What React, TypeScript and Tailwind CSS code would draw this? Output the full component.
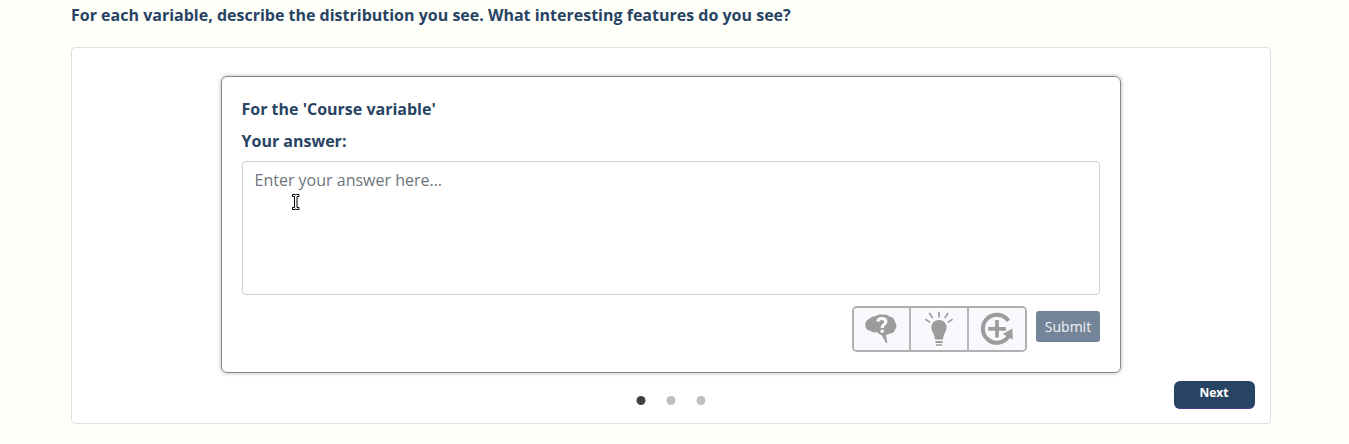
import React from 'react';

function BrainIcon() {
  return (
    <svg className="-ml-px" width="34" height="32" viewBox="0 0 34 32" aria-hidden="true">
      <path
        fill="#9c9c9c"
        d="M6 5.6C7.4 3.7 9.5 3 11.4 3.2 13.6 1.5 16.4 1 18.4 1.7 21.5 .9 24.6 1.9 26 3.8 29 4.2 30.8 6.4 30.8 8.8 32.9 10.7 33 14.2 31.2 16.2 30.6 19.2 28.2 20.8 25.5 20.6 24.6 21.6 23.2 22 21.8 21.9L23.4 29.7 22 30 17.6 21.9C15.5 21.6 13.8 20.6 13 19.1 10.5 20.1 7.4 19.5 6 17.6 3 17.2 1 14.8 1.4 12.4 1.2 9.2 3 6.4 6 5.6Z"
      />
      <path
        fill="none"
        stroke="#f8f9fc"
        strokeWidth="3.1"
        d="M13.8 8.6C13.9 6.5 15.5 5.5 17.8 5.5 20.3 5.5 21.9 6.6 21.9 8.7 21.9 11.5 18.2 11.4 18.2 15"
      />
      <circle cx="18.2" cy="18.2" r="1.8" fill="#f8f9fc" />
    </svg>
  );
}

function BulbIcon() {
  return (
    <svg width="32" height="38" viewBox="0 0 32 38" aria-hidden="true">
      <g stroke="#9c9c9c" strokeWidth="1.7">
        <path d="M2.4 9.2 7.2 12.4M6.2 3 9.7 8.1M16 1.8V7.5M25.1 3 21.8 8.1M29.6 9.3 24.8 12.4" />
      </g>
      <path
        fill="#9c9c9c"
        d="M16 10C11.6 10 8.4 13.2 8.4 17.2 8.4 21.9 11.6 22.9 12 29.5H20C20.4 22.9 23.6 21.9 23.6 17.2 23.6 13.2 20.4 10 16 10Z"
      />
      <path stroke="#9c9c9c" strokeWidth="2.2" d="M12.4 32H19.6" />
      <path stroke="#b3b3b3" strokeWidth="1.8" d="M13 35H19" />
    </svg>
  );
}

function AddCycleIcon() {
  return (
    <svg width="34" height="34" viewBox="0 0 34 34" aria-hidden="true">
      <g fill="none" stroke="#9c9c9c" strokeWidth="4.1">
        <path d="M28.4 8.8A14 14 0 1 0 28.6 24.4" />
        <path d="M17 8V25.6M8.2 16.8H25.8" strokeWidth="3.7" />
      </g>
      <path fill="#9c9c9c" d="M32.4 16.4 22.8 22 32.8 27.4Z" />
    </svg>
  );
}

function TextCursor() {
  return (
    <svg className="absolute left-[50px] top-[33px]" width="8" height="16" viewBox="0 0 8 16" aria-hidden="true">
      <path
        d="M.5.5H3L3.75 1 4.5 .5H7V2.5H5V13.5H7V15.5H4.5L3.75 15 3 15.5H.5V13.5H2.5V2.5H.5Z"
        fill="#fff"
        stroke="#000"
      />
    </svg>
  );
}

function Dot({ active = false }: { active?: boolean }) {
  return (
    <svg width="10" height="10" viewBox="0 0 10 10" aria-hidden="true">
      <circle cx="5" cy="4.5" r="4.5" fill={active ? '#404040' : '#bfbfbf'} />
    </svg>
  );
}

const toolButton = 'flex items-center justify-center bg-[#f8f9fc]';

export default function App() {
  return (
    <main className="h-[444px] overflow-hidden bg-[#fffffa] pl-[70.5px] pt-[3px] font-['Open_Sans',sans-serif] text-base text-[#284464]">
      <h1 className="mb-5 pl-[0.5px] font-bold leading-6">
        For each variable, describe the distribution you see. What interesting features do you see?
      </h1>
      <section className="flex h-[377px] w-[1200px] flex-col rounded-[4px] border border-[#dfdfdf] bg-white pt-7">
        <div className="mx-auto h-[297px] w-[900px] shrink-0 rounded-[6px] border border-[#888] px-5 pt-5 shadow-[0_0_4px_rgba(0,0,0,0.3)]">
          <p className="mb-2 font-bold leading-6">For the 'Course variable'</p>
          <label htmlFor="answer" className="mb-2 block font-bold leading-6">Your answer:</label>
          <div className="relative">
            <textarea
              id="answer"
              placeholder="Enter your answer here..."
              className="block h-[134px] w-full resize-none rounded-[4px] border border-[#c8d2da] px-3 py-1.5 leading-6 outline-none placeholder:text-[#6c757d]"
            />
            <TextCursor />
          </div>
          <div className="mt-[11px] flex items-start justify-end gap-[9px]">
            <div className="flex h-[46px] w-[175px] divide-x-[2px] divide-[#b6b6b6] overflow-hidden rounded-[5px] border-2 border-[#b0b0b0]">
              <button aria-label="Question" className={`${toolButton} w-[57px]`}><BrainIcon /></button>
              <button aria-label="Hint" className={`${toolButton} w-[58px]`}><BulbIcon /></button>
              <button aria-label="Add" className={`${toolButton} w-[56px]`}><AddCycleIcon /></button>
            </div>
            <button className="mt-[5px] h-[31px] w-16 rounded-[3px] bg-[#748499] pl-px text-sm text-white/90">Submit</button>
          </div>
        </div>
        <div className="flex items-start pl-[564.5px] pt-2">
          <div className="mt-[15px] flex gap-5">
            <Dot active />
            <Dot />
            <Dot />
          </div>
          <button className="ml-auto mr-[15px] h-7 w-[81px] rounded-[6px] border-b border-[#40408b] bg-[#284464] pb-1 text-xs font-bold text-white">
            Next
          </button>
        </div>
      </section>
    </main>
  );
}
